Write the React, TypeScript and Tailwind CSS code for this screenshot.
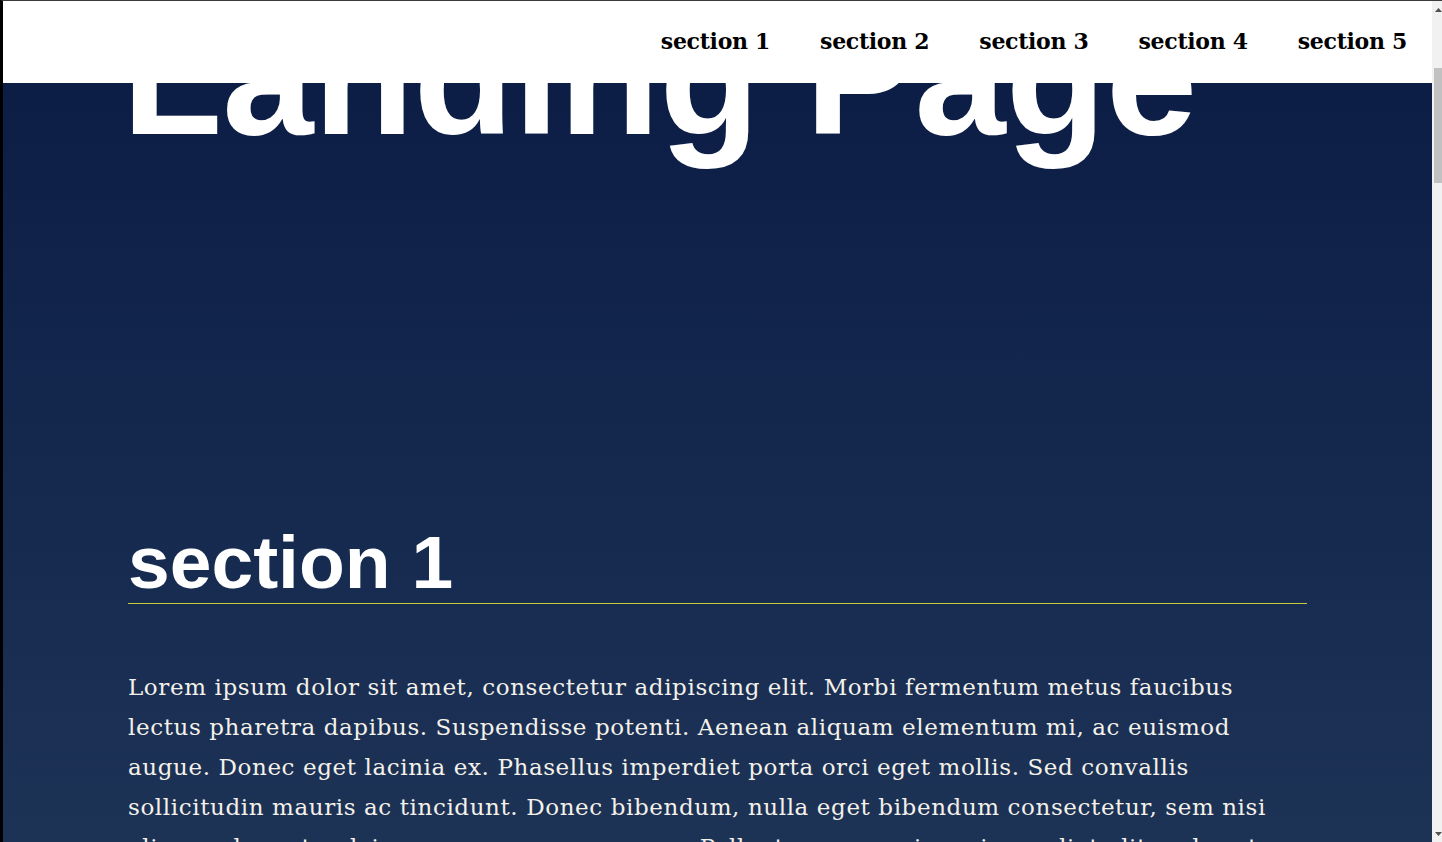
import React from "react";

const links = ["section 1", "section 2", "section 3", "section 4", "section 5"];

const lorem =
  "Lorem ipsum dolor sit amet, consectetur adipiscing elit. Morbi fermentum metus faucibus lectus pharetra dapibus. Suspendisse potenti. Aenean aliquam elementum mi, ac euismod augue. Donec eget lacinia ex. Phasellus imperdiet porta orci eget mollis. Sed convallis sollicitudin mauris ac tincidunt. Donec bibendum, nulla eget bibendum consectetur, sem nisi aliquam leo, ut pulvinar quam nunc eu augue. Pellentesque maximus imperdiet elit a pharetra. Duis lectus mi, aliquam in mi quis, aliquam porttitor lacus. Morbi a tincidunt felis. Sed leo nunc, pharetra et elementum non, faucibus vitae elit. Integer nec libero venenatis libero ultricies molestie semper in tellus. Sed congue et odio sed euismod.";

function NavBar() {
    return (
        <nav className="absolute inset-x-0 top-0 z-10 h-[82px] bg-white flex items-center justify-end gap-[50px] pr-[25px] pb-[2px]">
            {links.map((item) => (
                <a key={item} href="#" className="text-black font-bold text-[22px] leading-[28px] tracking-[-0.3px] font-['DejaVu_Serif',serif]">
                    {item}
                </a>
            ))}
        </nav>
    );
}

function ScrollBar() {
    return (
        <div className="w-[10px] shrink-0 bg-[#f1f1f1] flex flex-col">
            <div className="h-[17px] flex items-center justify-center pl-[2px]">
                <svg width="7" height="4" viewBox="0 0 7 4"><path d="M3.5 0 L7 4 L0 4 Z" fill="#505050" /></svg>
            </div>
            <div className="flex-1 pt-[50px] pl-[2px]">
                <div className="h-[115px] bg-[#c1c1c1]" />
            </div>
            <div className="h-[17px] flex items-center justify-center pl-[2px]">
                <svg width="7" height="4" viewBox="0 0 7 4"><path d="M0 0 L7 0 L3.5 4 Z" fill="#505050" /></svg>
            </div>
        </div>
    );
}

export default function App() {
    return (
        <div className="h-screen w-full overflow-hidden flex border-t border-t-[#3a3a3a] border-l-[3px] border-l-black">
            <div className="relative flex-1 overflow-hidden bg-gradient-to-b from-[#0b1b44] to-[#1d3356]">
                <NavBar />
                <main className="px-[125px] text-white">
                    <h1 className="mt-[-5px] ml-[-6px] text-[164px] leading-none font-bold whitespace-nowrap font-['Liberation_Sans',Arial,sans-serif]">
                        Landing Page
                    </h1>
                    <section>
                        <h2 className="mt-[365px] pb-[3px] border-b border-[#c9c93a] text-[75px] leading-none font-bold font-['Liberation_Sans',Arial,sans-serif]">
                            section 1
                        </h2>
                        <p className="mt-[63px] text-[23px] leading-[40px] tracking-[0.6px] text-[#f4f1ea] font-['DejaVu_Serif',serif]">
                            {lorem}
                        </p>
                    </section>
                </main>
            </div>
            <ScrollBar />
        </div>
    );
}
